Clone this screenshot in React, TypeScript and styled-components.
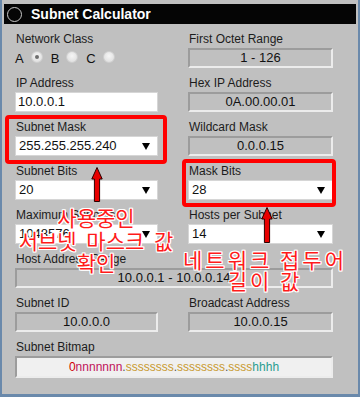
import React from 'react'
import styled, { createGlobalStyle } from 'styled-components'

const Global = createGlobalStyle`
  html, body { margin: 0; padding: 0; background: #c0c0c0; }
  body { font-family: "Liberation Sans", Arial, sans-serif; }
`

const Frame = styled.div`
  position: relative;
  box-sizing: border-box;
  width: 360px; height: 397px;
  background: #c0c0c0;
  border: 2px solid #6a89ab;
  border-top: 0;
  border-bottom-width: 3px;
  padding-top: 4px;
  overflow: hidden;
`

const TitleBar = styled.div`
  height: 20px;
  margin: 0 2px;
  background: #050505;
  display: flex;
  align-items: center;
  gap: 9px;
  padding-left: 3px;
  color: #fff;
  font-size: 14px;
  font-weight: bold;
`

const Ring = styled.span`
  box-sizing: border-box;
  width: 15px; height: 15px;
  border-radius: 50%;
  border: 1.5px solid #c8c8c8;
`

const Grid = styled.div`
  display: grid;
  grid-template-columns: 143px 145px;
  column-gap: 30px;
  row-gap: 8px;
  padding: 8px 25px 0 13px;
`

const Group = styled.div<{ $wide?: boolean }>`
  position: relative;
  display: flex;
  flex-direction: column;
  grid-column: ${p => (p.$wide ? '1 / span 2' : 'auto')};
`

const Label = styled.div`
  height: 14px;
  line-height: 14px;
  margin: 0 0 2px 1px;
  font-size: 12px;
  color: #1c1c1c;
  white-space: nowrap;
`

const TextBox = styled.div`
  box-sizing: border-box;
  height: 20px;
  background: #fff;
  border: 1px solid #d6d6d6;
  padding: 0 2px;
  font-size: 13px;
  line-height: 18px;
  color: #111;
`

const SelectBox = styled(TextBox)`
  display: flex;
  align-items: center;
  justify-content: space-between;
  padding: 0 7px 0 3px;
`

const Caret = styled.span`
  width: 0; height: 0;
  border-left: 4px solid transparent;
  border-right: 4px solid transparent;
  border-top: 7px solid #000;
`

const ReadOut = styled.div<{ $light?: boolean; $tall?: boolean }>`
  box-sizing: border-box;
  height: ${p => (p.$tall ? 22 : 20)}px;
  background: ${p => (p.$light ? '#f0f0f0' : '#c0c0c0')};
  border: 2px solid;
  border-color: #9c9c9c #ececec #ececec #9c9c9c;
  text-align: center;
  font-size: ${p => (p.$tall ? 12 : 13)}px;
  line-height: ${p => (p.$tall ? 18 : 16)}px;
  color: #111;
`

const RadioRow = styled.div`
  height: 20px;
  display: flex;
  align-items: center;
  font-size: 13px;
  color: #111;
`

const Radio = styled.span<{ $on?: boolean }>`
  box-sizing: border-box;
  width: 12px; height: 12px;
  margin: 0 8px 3px 7px;
  border-radius: 50%;
  background: radial-gradient(circle at 50% 40%, #f6f6f6 0%, #e2e2e2 70%, #d2d2d2 100%);
  border: 1px solid #cfcfcf;
  display: flex;
  align-items: center;
  justify-content: center;
  &::after {
    content: '';
    width: 4px; height: 4px;
    border-radius: 50%;
    background: ${p => (p.$on ? '#6e6e6e' : 'transparent')};
  }
`

const Highlight = styled.span<{ $inset: string }>`
  position: absolute;
  inset: ${p => p.$inset};
  border: 4px solid #ff0000;
  border-radius: 4px;
  pointer-events: none;
`

const Bits = styled.span<{ $c: string }>`
  color: ${p => p.$c};
`

const Note = styled.div<{ $left: number; $top: number; $size: number; $lh: number; $ls: number; $ws: number }>`
  position: absolute;
  left: ${p => p.$left}px;
  top: ${p => p.$top}px;
  width: 200px;
  text-align: center;
  font-family: "Noto Sans CJK KR", sans-serif;
  font-size: ${p => p.$size}px;
  line-height: ${p => p.$lh}px;
  letter-spacing: ${p => p.$ls}px;
  word-spacing: ${p => p.$ws}px;
  color: #ff1a1a;
  text-shadow:
    1px 0 #fff, -1px 0 #fff, 0 1px #fff, 0 -1px #fff,
    1px 1px #fff, -1px -1px #fff, 1px -1px #fff, -1px 1px #fff;
  white-space: nowrap;
`

const ArrowSvg = styled.svg<{ $left: number; $top: number }>`
  position: absolute;
  left: ${p => p.$left}px;
  top: ${p => p.$top}px;
  overflow: visible;
`

const UpArrow = ({ left, top, len }: { left: number; top: number; len: number }) => (
  <ArrowSvg $left={left} $top={top} width={12} height={len} viewBox={`0 0 12 ${len}`}>
    <path
      d={`M6 0.5 L11.2 12 L8.6 12 L8.6 ${len - 0.5} L3.4 ${len - 0.5} L3.4 12 L0.8 12 Z`}
      fill="#e80000"
      stroke="#2a0000"
      strokeWidth={1}
    />
  </ArrowSvg>
)

const Field = ({ label, children, wide, mark }: { label: string; children: React.ReactNode; wide?: boolean; mark?: string }) => (
  <Group $wide={wide}>
    <Label>{label}</Label>
    {children}
    {mark && <Highlight $inset={mark} />}
  </Group>
)

const Select = ({ value }: { value: string }) => (
  <SelectBox>
    <span>{value}</span>
    <Caret />
  </SelectBox>
)

export default function App() {
  return (
    <Frame>
      <Global />
      <TitleBar>
        <Ring />
        Subnet Calculator
      </TitleBar>
      <Grid>
        <Field label="Network Class">
          <RadioRow>
            A<Radio $on />B<Radio />C<Radio />
          </RadioRow>
        </Field>
        <Field label="First Octet Range">
          <ReadOut>1 - 126</ReadOut>
        </Field>

        <Field label="IP Address">
          <TextBox>10.0.0.1</TextBox>
        </Field>
        <Field label="Hex IP Address">
          <ReadOut>0A.00.00.01</ReadOut>
        </Field>

        <Field label="Subnet Mask" mark="-5px -9px -8px -10px">
          <Select value="255.255.255.240" />
        </Field>
        <Field label="Wildcard Mask">
          <ReadOut>0.0.0.15</ReadOut>
        </Field>

        <Field label="Subnet Bits">
          <Select value="20" />
        </Field>
        <Field label="Mask Bits" mark="-5px -3px -7px -6px">
          <Select value="28" />
        </Field>

        <Field label="Maximum Subnets">
          <Select value="1048576" />
        </Field>
        <Field label="Hosts per Subnet">
          <Select value="14" />
        </Field>

        <Field label="Host Address Range" wide>
          <ReadOut>10.0.0.1 - 10.0.0.14</ReadOut>
        </Field>

        <Field label="Subnet ID">
          <ReadOut>10.0.0.0</ReadOut>
        </Field>
        <Field label="Broadcast Address">
          <ReadOut>10.0.0.15</ReadOut>
        </Field>

        <Field label="Subnet Bitmap" wide>
          <ReadOut $light $tall>
            <Bits $c="#d00000">0</Bits>
            <Bits $c="#c0145a">nnnnnnn</Bits>
            <Bits $c="#555">.</Bits>
            <Bits $c="#c99a2e">ssssssss</Bits>
            <Bits $c="#555">.</Bits>
            <Bits $c="#c99a2e">ssssssss</Bits>
            <Bits $c="#555">.</Bits>
            <Bits $c="#c99a2e">ssss</Bits>
            <Bits $c="#2a9d8f">hhhh</Bits>
          </ReadOut>
        </Field>
      </Grid>

      <UpArrow left={89} top={167} len={35} />
      <UpArrow left={259} top={207} len={36} />

      <Note $left={-6} $top={206} $size={21} $lh={22.5} $ls={0} $ws={5}>
        사용중인
        <br />
        서브넷 마스크 값
        <br />
        확인
      </Note>
      <Note $left={163} $top={249} $size={21} $lh={21} $ls={3} $ws={0}>
        네트워크 접두어
        <br />
        길이 값
      </Note>
    </Frame>
  )
}
